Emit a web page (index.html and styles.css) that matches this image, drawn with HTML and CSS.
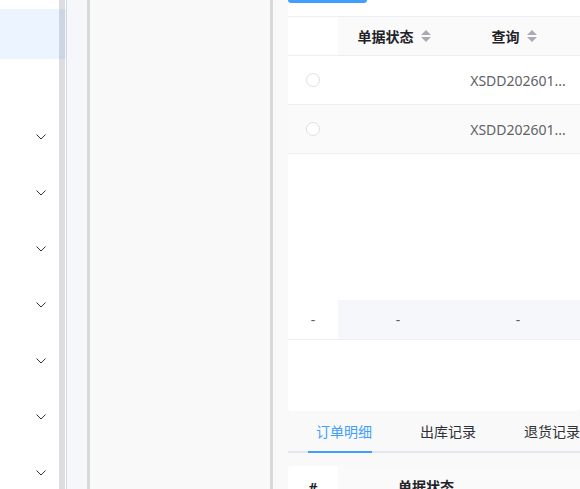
FILE: index.html
```html
<!DOCTYPE html>
<html lang="zh-CN">
<head>
<meta charset="utf-8">
<title>订单</title>
<link rel="stylesheet" href="styles.css">
</head>
<body>
<div class="app">
  <aside class="sidebar">
    <div class="scrollbar"></div>
    <div class="menu">
      <div class="menu-spacer"></div>
      <div class="menu-item active"></div>
      <div class="menu-item"></div>
      <div class="submenu"><svg class="chev" viewBox="0 0 10 6" width="10" height="6"><polyline points="0.5,0.5 5,5 9.5,0.5"/></svg></div>
      <div class="submenu"><svg class="chev" viewBox="0 0 10 6" width="10" height="6"><polyline points="0.5,0.5 5,5 9.5,0.5"/></svg></div>
      <div class="submenu"><svg class="chev" viewBox="0 0 10 6" width="10" height="6"><polyline points="0.5,0.5 5,5 9.5,0.5"/></svg></div>
      <div class="submenu"><svg class="chev" viewBox="0 0 10 6" width="10" height="6"><polyline points="0.5,0.5 5,5 9.5,0.5"/></svg></div>
      <div class="submenu"><svg class="chev" viewBox="0 0 10 6" width="10" height="6"><polyline points="0.5,0.5 5,5 9.5,0.5"/></svg></div>
      <div class="submenu"><svg class="chev" viewBox="0 0 10 6" width="10" height="6"><polyline points="0.5,0.5 5,5 9.5,0.5"/></svg></div>
      <div class="submenu"><svg class="chev" viewBox="0 0 10 6" width="10" height="6"><polyline points="0.5,0.5 5,5 9.5,0.5"/></svg></div>
    </div>
  </aside>
  <div class="strip-light"></div>
  <div class="divider"></div>
  <div class="middle"></div>
  <div class="divider"></div>
  <div class="gutter"></div>
  <main class="content">
    <section class="panel top-panel">
      <div class="btn-primary"></div>
      <div class="table">
        <div class="row head">
          <div class="cell first"></div>
          <div class="cell"><span class="th">单据状态</span><span class="sort"><i class="up"></i><i class="down"></i></span></div>
          <div class="cell"><span class="th">查询</span><span class="sort"><i class="up"></i><i class="down"></i></span></div>
          <div class="cell"></div>
        </div>
        <div class="row body">
          <div class="cell first"><span class="radio"></span></div>
          <div class="cell"></div>
          <div class="cell"><span class="td">XSDD202601...</span></div>
          <div class="cell"></div>
        </div>
        <div class="row body striped">
          <div class="cell first"><span class="radio"></span></div>
          <div class="cell"></div>
          <div class="cell"><span class="td">XSDD202601...</span></div>
          <div class="cell"></div>
        </div>
        <div class="table-empty"></div>
        <div class="row sum">
          <div class="cell first"><span class="td">-</span></div>
          <div class="cell"><span class="td">-</span></div>
          <div class="cell"><span class="td">-</span></div>
          <div class="cell"></div>
        </div>
      </div>
    </section>
    <nav class="tabs">
      <div class="tab active">订单明细</div>
      <div class="tab">出库记录</div>
      <div class="tab">退货记录</div>
    </nav>
    <section class="panel bottom-panel">
      <div class="row head2">
        <div class="cell first"><span class="th">#</span></div>
        <div class="cell left"><span class="th">单据状态</span></div>
        <div class="cell"></div>
      </div>
    </section>
  </main>
</div>
</body>
</html>
```
FILE: styles.css
```css
* { box-sizing: border-box; }
html, body { margin: 0; padding: 0; }
body {
  width: 580px;
  height: 489px;
  overflow: hidden;
  background: #f9f9f9;
  font-family: "Noto Sans", "Noto Sans CJK SC", sans-serif;
  font-size: 14px;
  color: #303133;
}
.app {
  display: flex;
  height: 489px;
}
.sidebar {
  position: relative;
  width: 67px;
  flex: none;
  background: #ffffff;
  border-right: 1px solid #d3d8e2;
}
.scrollbar {
  position: absolute;
  top: 0;
  bottom: 0;
  left: 59px;
  width: 6px;
  background: #dcdde0;
}
.menu {
  position: relative;
  z-index: 1;
}
.menu-spacer { height: 9px; }
.menu-item { height: 50px; }
.menu-item.active { background: rgba(64, 158, 255, 0.1); }
.submenu {
  height: 56px;
  display: flex;
  align-items: center;
  padding-left: 36px;
}
.chev {
  fill: none;
  stroke: #303133;
  stroke-width: 1;
}
.strip-light {
  width: 20px;
  flex: none;
  background: #f5f7fa;
}
.divider {
  width: 3px;
  flex: none;
  background: #d9d9d9;
}
.middle {
  width: 180px;
  flex: none;
  background: #f9f9f9;
}
.gutter {
  width: 15px;
  flex: none;
  background: #f9f9f9;
}
.content {
  flex: 1;
  min-width: 0;
  overflow: hidden;
  display: flex;
  flex-direction: column;
}
.panel { background: #ffffff; }
.top-panel {
  flex: none;
  height: 411px;
  border-radius: 0 0 4px 4px;
}
.btn-primary {
  width: 79px;
  height: 3px;
  background: #409eff;
  border-radius: 0 0 4px 4px;
  margin-bottom: 13px;
}
.table {
  display: flex;
  flex-direction: column;
  border-top: 1px solid #ebeef5;
}
.row {
  display: grid;
  grid-template-columns: 50px 120px 120px 1fr;
  border-bottom: 1px solid #ebeef5;
}
.cell {
  display: flex;
  align-items: center;
  justify-content: center;
}
.head { height: 39px; background: #fafafa; }
.head .first { background: #ffffff; }
.head .cell { padding-right: 8px; }
.head .first { padding-right: 0; }
.th {
  font-weight: 700;
  color: #1f2329;
}
.sort {
  display: inline-flex;
  flex-direction: column;
  gap: 2px;
  margin-left: 7px;
}
.sort i {
  width: 0;
  height: 0;
  border-left: 5px solid transparent;
  border-right: 5px solid transparent;
}
.sort .up { border-bottom: 5px solid #a8abb2; }
.sort .down { border-top: 5px solid #a8abb2; }
.body { height: 49px; }
.striped { background: #fafafa; }
.td { color: #606266; }
.radio {
  width: 14px;
  height: 14px;
  border: 1px solid #dcdfe6;
  border-radius: 50%;
  background: #ffffff;
}
.table-empty { height: 146px; }
.sum {
  height: 40px;
  background: #f5f7fa;
}
.sum .first { background: #ffffff; }
.tabs {
  flex: none;
  display: flex;
  gap: 48px;
  height: 42px;
  padding: 2px 0 0 28px;
  border-bottom: 2px solid #e4e7ed;
}
.tab {
  position: relative;
  line-height: 38px;
  color: #303133;
  white-space: nowrap;
}
.tab.active { color: #409eff; }
.tab.active::after {
  content: "";
  position: absolute;
  left: -8px;
  right: 0;
  bottom: -2px;
  height: 2px;
  background: #409eff;
}
.bottom-panel {
  flex: none;
  height: 40px;
  margin-top: 13px;
  border-radius: 4px 4px 0 0;
}
.head2 {
  grid-template-columns: 50px 1fr 120px;
  height: 40px;
  border-bottom: none;
  background: #fafafa;
  border-radius: 4px 0 0 0;
}
.head2 .first { background: #ffffff; border-radius: 4px 0 0 0; padding-top: 2px; }
.head2 .left { justify-content: flex-start; padding-left: 60px; }
```
